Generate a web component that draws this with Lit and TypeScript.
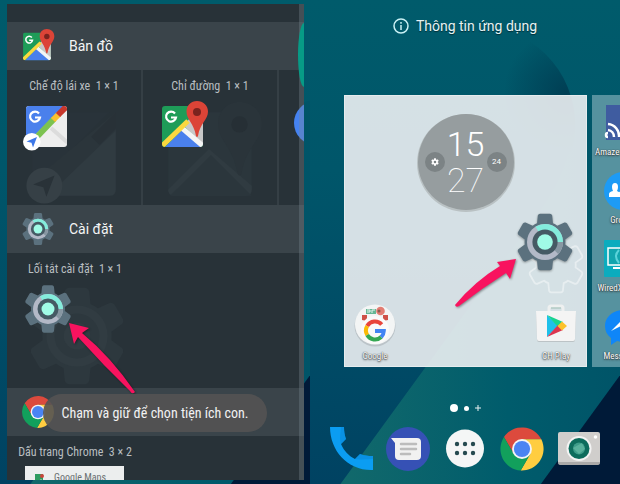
import { LitElement, html, svg, css } from "lit";
import { customElement } from "lit/decorators.js";

const polar = (r: number, deg: number) => {
  const a = (deg * Math.PI) / 180;
  return `${(25 + r * Math.sin(a)).toFixed(2)} ${(25 - r * Math.cos(a)).toFixed(2)}`;
};

// Six-toothed cog outline in a 50 x 50 box
const gearPath =
  [0, 60, 120, 180, 240, 300]
    .map(
      (a, i) =>
        `${i ? "A17 17 0 0 1" : "M"} ${polar(17, a - 23)} L${polar(23, a - 15)} Q${polar(24, a - 13)} ${polar(24, a - 10)} L${polar(24, a + 10)} Q${polar(24, a + 13)} ${polar(23, a + 15)} L${polar(17, a + 23)}`
    )
    .join(" ") + ` A17 17 0 0 1 ${polar(17, -23)}Z`;

const gear = (cls: string) => html`<svg class=${cls} viewBox="0 0 50 50" aria-hidden="true">
  <path d=${gearPath} fill="#5b717e" />
  <circle cx="25" cy="25" r="15" fill="#b3b9c7" />
  <path d="M25 10a15 15 0 0 1 15 15h-8a7 7 0 0 0-7-7z" fill="#84ecdc" />
  <path d="M25 10a15 15 0 0 0-8 2.300l4 6.500 4-1z" fill="#84ecdc" />
  <path d="M40 25a15 15 0 0 1-4 10l-5-5 1-5z" fill="#8797a2" />
  <circle cx="25" cy="25" r="10.500" fill="#455a64" />
  <circle cx="25" cy="25" r="6.500" fill="#a0fbe6" />
</svg>`;

const gearGhost = html`<svg class="ghost" viewBox="0 0 50 50" aria-hidden="true">
  <path d=${gearPath} fill="#2d383e" />
  <circle cx="25" cy="25" r="13" fill="none" stroke="#313c42" stroke-width="4" />
  <circle cx="25" cy="25" r="6.500" fill="#313c42" />
</svg>`;

const whiteG = svg`<path d="M16 12.500A5 5 0 1 0 17 16.500H12" fill="none" stroke="#fff" stroke-width="2.200" />`;

const pin = "M38 0c-6 0-10.500 4.600-10.500 10.500C27.500 19 35 22 37 35q1 2 2 0c2-13 10-16 10-24.500C49 4.600 44 0 38 0z";

const mapIcon = (cls: string) => html`<svg class=${cls} viewBox="0 0 50 50" aria-hidden="true">
  <defs><clipPath id="map-sq"><rect x="3" y="5" width="41" height="41" rx="3" /></clipPath></defs>
  <g clip-path="url(#map-sq)">
    <path d="M3 5h41v41H3z" fill="#1e9c58" />
    <path d="M24 24L44 5v38z" fill="#c8c8c8" />
    <path d="M5 47l19-19 20 20z" fill="#4a80ec" />
    <path d="M23 27l22 19" stroke="#f5f5f5" stroke-width="5" />
    <path d="M1 47L29 20" stroke="#fbd83f" stroke-width="5" />
  </g>
  ${whiteG}
  <path d=${pin} fill="#dc4437" />
  <circle cx="38" cy="11" r="4" fill="#7b231e" />
</svg>`;

const mapGhost = html`<svg class="ghost" viewBox="0 0 50 50" aria-hidden="true">
  <rect x="3" y="5" width="41" height="41" rx="3" fill="#2b363c" />
  <path d="M3 43L23 23l21 18v2q0 3-3 3H6q-3 0-3-3z" fill="#303b41" />
  <path d="M4 46L24 26l20 20z" fill="#2b363c" />
  <path d=${pin} fill="#2a343a" />
  <circle cx="38" cy="11" r="4" fill="#262f35" />
</svg>`;

const driveIcon = html`<svg class="ic50" viewBox="0 0 50 50" aria-hidden="true">
  <defs><clipPath id="drive-sq"><rect x="3" y="5" width="41" height="41" rx="3" /></clipPath></defs>
  <g clip-path="url(#drive-sq)">
    <path d="M3 5h41v41H3z" fill="#eee" />
    <path d="M3 5h38L3 43z" fill="#4a80ec" />
    <path d="M28 27l17 15" stroke="#dcdcdc" stroke-width="4" />
    <path d="M8 42L31 18" stroke="#7cc250" stroke-width="6" />
    <path d="M30 19l6-6" stroke="#fbc02d" stroke-width="6" />
    <path d="M35 14L46 3" stroke="#c8372c" stroke-width="6" />
  </g>
  ${whiteG}
  <circle cx="8.800" cy="40.800" r="8.800" fill="#fff" />
  <path d="M14 36L3.500 40.500l5 1.300 1.500 4.700z" fill="#3d78e8" />
</svg>`;

const driveGhost = html`<svg class="ghost" viewBox="0 0 50 50" aria-hidden="true">
  <path d="M44 6v37q0 3-3 3H14L9 34z" fill="#303b41" />
  <path d="M3 5h38L3 43z" fill="#29333a" />
  <path d="M9 34L44 5v9L17 40z" fill="#2b353b" />
  <path d="M32 17l4 4 8-8V5z" fill="#283137" />
  <circle cx="9" cy="41" r="8.800" fill="#364046" />
  <path d="M14 36L3.500 40.500l5 1.300 1.500 4.700z" fill="#293238" />
</svg>`;

const chromeIcon = (cls: string) => html`<svg class=${cls} viewBox="0 0 50 50" aria-hidden="true">
  <path d="M5.400 12.050A23.500 23.500 0 0 1 46 14.500H25L15.900 30.250z" fill="#dc4a3d" />
  <path d="M46 14.500A23.500 23.500 0 0 1 23.600 48.400L34.100 30.250 25 14.500z" fill="#ffcd40" />
  <path d="M23.600 48.400A23.500 23.500 0 0 1 5.400 12.050L15.900 30.250H34.100z" fill="#12a05c" />
  <circle cx="25" cy="25" r="10.800" fill="#f4f4f4" />
  <circle cx="25" cy="25" r="8.800" fill="#4a84f3" />
</svg>`;

const wallpaper = (id: string) => html`<svg class="wall" viewBox="0 0 310 484" preserveAspectRatio="xMidYMid slice" aria-hidden="true">
  <defs>
    <linearGradient id="${id}b" x1="0" y1="0" x2="0" y2="1">
      <stop offset="0" stop-color="#005b6b" /><stop offset=".35" stop-color="#00566a" /><stop offset="1" stop-color="#004262" />
    </linearGradient>
    <linearGradient id="${id}t" x1="0" y1="0" x2="1" y2="0">
      <stop offset="0" stop-color="#12696b" /><stop offset=".6" stop-color="#005c6c" /><stop offset="1" stop-color="#005468" />
    </linearGradient>
    <radialGradient id="${id}s" gradientUnits="userSpaceOnUse" cx="256" cy="92" r="62">
      <stop offset="0" stop-color="#003a50" stop-opacity=".85" /><stop offset="1" stop-color="#003a50" stop-opacity="0" />
    </radialGradient>
  </defs>
  <path d="M0 0h310v484H0z" fill="url(#${id}b)" />
  <path d="M30 484L113 370 230 210Q262 165 265 115L310 100V484z" fill="url(#${id}t)" />
  <circle cx="165" cy="125" r="100" fill="url(#${id}s)" />
  <path d="M310 374v110h-80z" fill="#001a38" />
</svg>`;

const phoneIcon = html`<svg class="dock-ic" viewBox="0 0 46 46" aria-hidden="true">
  <path d="M2 1h14c0 4 .6 8 2 12l-5 5c3 7 8 12 14 15l5-5c4 1.500 8 2 13 2v14C20 45 2 25 2 1z" fill="#0b9df2" />
  <path d="M13 18l5-5c-1.400-4-2-8-2-12h-3c0 5-2 11 0 17zM27 33l5-5c4 1.500 8 2 13 2v3c-6 0-12 1-18 0z" fill="#0785d6" opacity=".5" />
</svg>`;

const messagesIcon = html`<svg class="dock-ic" viewBox="0 0 46 46" aria-hidden="true">
  <circle cx="23" cy="23" r="22" fill="#3651b5" />
  <path d="M6 12h26q4 0 4 4v14q0 4-4 4H14q-4 0-4-4V17z" fill="#f1f1f1" />
  <path d="M16 18h15M16 23h15M16 28h9" stroke="#bcbcbc" stroke-width="2.500" stroke-linecap="round" />
</svg>`;

const appsIcon = html`<svg class="dock-ic" viewBox="0 0 46 46" aria-hidden="true">
  <circle cx="23" cy="22.500" r="19" fill="#f4f6f6" />
  ${[15, 23, 31].map((x) => [18, 27].map((y) => svg`<circle cx=${x} cy=${y} r="2.200" fill="#254a50" />`))}
</svg>`;

const cameraIcon = html`<svg class="dock-ic" viewBox="0 0 46 46" aria-hidden="true">
  <rect x="2" y="6" width="42" height="32" rx="2" fill="#d0cecc" />
  <path d="M2 36h42q0 3-2 3H4q-2 0-2-3z" fill="#aaa9a8" />
  <circle cx="23" cy="22.500" r="12.500" fill="#f3f3f3" />
  <circle cx="23" cy="22.500" r="10.500" fill="#0d6c5c" />
  <circle cx="23" cy="22.500" r="6" fill="#3d9c89" />
  <path d="M17 22l9-5 3 6-6 5z" fill="#6dbfa9" opacity=".6" />
  <circle cx="39.500" cy="11" r="1.800" fill="#fff" />
</svg>`;

const googleFolder = html`<svg class="app-ic" viewBox="0 0 42 44" aria-hidden="true">
  <circle cx="21" cy="23" r="20.500" fill="#000" opacity=".12" />
  <circle cx="21" cy="21.500" r="20" fill="#f3f5f5" />
  <path d="M8 12h5v6l-5-1zM29 12h5v5l-5 1z" fill="#cf5148" />
  <path d="M12 6h10v5H12z" fill="#65b795" />
  <path d="M13 7h3v2h-3M18 10V7h3" stroke="#e8f4ef" stroke-width="1" fill="none" />
  <circle cx="26.500" cy="8" r="4.300" fill="#e27c72" />
  <circle cx="25" cy="8" r="1.500" fill="#8a5b50" />
  <circle cx="21" cy="27" r="14" fill="#fafafa" />
  <g fill="none" stroke-width="4">
    <path d="M27.700 21.500A9 9 0 0 0 13.200 23" stroke="#e8453c" />
    <path d="M13.200 23a9 9 0 0 0 0 9" stroke="#fbbb05" />
    <path d="M13.200 32a9 9 0 0 0 14 2" stroke="#35a853" />
    <path d="M27.200 34a9 9 0 0 0 2.600-6H21" stroke="#4285f4" />
  </g>
</svg>`;

const playIcon = html`<svg class="app-ic" viewBox="0 0 42 44" aria-hidden="true">
  <path d="M14 9V5q0-2 2-2h10q2 0 2 2v4" fill="none" stroke="#eef0f0" stroke-width="3" />
  <path d="M16 5h10" stroke="#9fc0b4" stroke-width="1" />
  <path d="M1 9h40l-1 28q0 2-2 2H4q-2 0-2-2z" fill="#bcc3c6" />
  <path d="M1 8h40l-1 28q0 2-2 2H4q-2 0-2-2z" fill="#f4f4f4" />
  <path d="M12 12v22l11-11z" fill="#1fc0ea" />
  <path d="M12 12l16 7-5 5z" fill="#18d38f" />
  <path d="M12 34l16-7-5-5z" fill="#dc3550" />
  <path d="M27 18.500L32 23l-5 4.500L22.500 23z" fill="#fcc22b" />
</svg>`;

const feedIcon = html`<svg class="side-ic" viewBox="0 0 38 38" aria-hidden="true">
  <path d="M2 1h36v35H2z" fill="#3f5ca0" />
  <path d="M3 34a1 1 0 0 1 0-4M3 27a7 7 0 0 1 6 7M3 21a12 12 0 0 1 11 13" transform="translate(1 -1)" fill="none" stroke="#fff" stroke-width="2.500" />
</svg>`;
const groupsIcon = html`<svg class="side-ic" viewBox="0 0 38 38" aria-hidden="true">
  <circle cx="19" cy="19" r="19" fill="#1d9bf5" />
  <path d="M5 25v-3q0-2 4-3-1-2-1-4 0-4 3-4t3 4q0 2-1 4 3 1 3 3v3zM14 25v-3q0-2 3-3-1-2-1-5t4-4 4 4-1 5q4 1 4 4v2z" fill="#fff" />
</svg>`;
const displayIcon = html`<svg class="side-ic" viewBox="0 0 38 38" aria-hidden="true">
  <rect width="38" height="37" rx="1" fill="#0bacbe" />
  <path d="M4 8h32v17H4z" fill="#13a5ae" stroke="#fff" stroke-width="1.500" />
  <path d="M15 10q-6 6 0 13M19 11q-4 5 0 11" fill="none" stroke="#5bd3da" stroke-width="2" />
  <path d="M9 28h20" stroke="#fff" stroke-width="2" />
</svg>`;
const messengerIcon = html`<svg class="side-ic" viewBox="0 0 38 38" aria-hidden="true">
  <path d="M20 2C9 2 1 9 1 18c0 5 2 9 6 12v7l6-4c2 .6 5 1 7 1 11 0 19-7 19-16S31 2 20 2z" fill="#0f86f8" />
  <path d="M7 23l11-11 5 5 9-5-10 11-5-5z" fill="#fff" />
</svg>`;

const base = css`
  :host { display: block; font-family: "Roboto Condensed", Roboto, "Noto Sans", sans-serif; }
  * { box-sizing: border-box; }
  .screen { position: relative; overflow: hidden; height: 100%; isolation: isolate; }
  .wall { position: absolute; inset: 0; width: 100%; height: 100%; z-index: -1; }
  .arrow { position: absolute; overflow: visible; filter: drop-shadow(1px 1px 1px rgba(0, 0, 0, 0.4)); pointer-events: none; }
`;

@customElement("widget-picker")
export class WidgetPicker extends LitElement {
  static styles = [
    base,
    css`
      .screen { padding: 4px 6px 5px 7px; display: flex; }
      .panel { position: relative; flex: 1; min-width: 0; display: flex; flex-direction: column; background: #283238; padding-top: 18px; overflow: hidden; }
      .panel::after { content: ""; position: absolute; inset: 0 0 0 auto; width: 5px; background: rgba(120, 135, 142, 0.35); }
      .edge { position: absolute; right: 0; top: 19px; width: 6px; height: 64px; background: #079b86; border-radius: 6px 0 0 6px / 32px 0 0 32px; z-index: 1; }
      header { display: flex; align-items: center; gap: 12px; height: 48px; flex: none; padding-left: 12px; background: #3a444a; }
      h2 { margin: 0; font: 400 14px/20px Roboto, "Noto Sans", sans-serif; color: #f4f5f5; }
      .hic { width: 34px; height: 34px; margin: 0 2px; }
      .row { display: flex; height: 135px; flex: none; }
      .last { flex: 1 0 44px; height: 0; overflow: hidden; }
      .cell { width: 136px; flex: none; padding-top: 8px; }
      .row.divided .cell { border-right: 2px solid #353f45; }
      .name { margin: 0; font-size: 12px; line-height: 16px; text-align: center; color: #b9bec0; white-space: nowrap; }
      .art { position: relative; margin: 7px 0 0 16px; }
      .ic50 { position: relative; display: block; width: 50px; height: 50px; }
      .ghost { position: absolute; left: 3px; top: 1px; width: 102px; height: 102px; }
      .disc { width: 44px; height: 44px; margin: 4px 0 0 -1px; border-radius: 50%; background: #4582f0; }
      .preview { display: flex; gap: 10px; align-items: center; width: 99px; height: 24px; margin: 6px 0 0 18px; padding: 0 10px; background: #eceeee; color: #6b7072; font-size: 10px; line-height: 24px; white-space: nowrap; }
      .mini { width: 9px; height: 9px; flex: none; }
      .toast { position: absolute; left: 50%; bottom: 53px; transform: translateX(-50%); width: 224px; height: 38px; border-radius: 19px; background: rgba(84, 83, 83, 0.9); color: #f2f2f2; font-size: 14px; line-height: 38px; text-align: center; white-space: nowrap; }
      .arrow { left: 69px; top: 323px; width: 66px; height: 70px; }
    `,
  ];
  render() {
    return html`<section class="screen">
      ${wallpaper("l")}
      <div class="panel">
        <header>${mapIcon("hic")}<h2>Bản đồ</h2></header>
        <div class="row divided">
          <div class="cell"><p class="name">Chế độ lái xe&nbsp; 1 × 1</p><div class="art">${driveGhost}${driveIcon}</div></div>
          <div class="cell"><p class="name">Chỉ đường&nbsp; 1 × 1</p><div class="art">${mapGhost}${mapIcon("ic50")}</div></div>
          <div class="cell"><p class="name">&nbsp;</p><div class="art"><div class="disc"></div></div></div>
        </div>
        <header>${gear("hic")}<h2>Cài đặt</h2></header>
        <div class="row">
          <div class="cell"><p class="name">Lối tắt cài đặt&nbsp; 1 × 1</p><div class="art">${gearGhost}${gear("ic50")}</div></div>
        </div>
        <header>${chromeIcon("hic")}</header>
        <div class="row last">
          <div class="cell">
            <p class="name">Dấu trang Chrome&nbsp; 3 × 2</p>
            <div class="preview">
              <svg class="mini" viewBox="0 0 9 9" aria-hidden="true"><path d="M0 0h8v9H0z" fill="#2e9c60" /><path d="M3 9l3-4 3 4z" fill="#eee" /><circle cx="7" cy="2" r="2" fill="#c9453a" /></svg>
              <span>Google Maps</span>
            </div>
          </div>
        </div>
        <div class="edge"></div>
      </div>
      <svg class="arrow" viewBox="0 0 66 70" aria-hidden="true"><path d="M0 0L20 5l-7 5Q42 34 66 69q-3 3-5-1Q34 42 9 14L5 21z" fill="#f8135f" /></svg>
      <div class="toast" role="status">Chạm và giữ để chọn tiện ích con.</div>
    </section>`;
  }
}

@customElement("home-screen")
export class HomeScreen extends LitElement {
  static styles = [
    base,
    css`
      .screen { display: flex; flex-direction: column; }
      button { display: block; border: 0; padding: 0; margin: 0; background: none; font: inherit; color: inherit; }
      .info { display: flex; align-items: center; gap: 7px; align-self: center; margin-top: 16px; font: 400 14px/20px Roboto, "Noto Sans", sans-serif; color: #e6f2f3; text-shadow: 0 1px 1px rgba(0, 0, 0, 0.5); }
      .info svg { width: 16px; height: 16px; }
      .pages { display: flex; gap: 5px; margin: 59px 0 0 34px; height: 272px; }
      .page { flex: 1; min-width: 0; display: flex; flex-direction: column; justify-content: space-between; padding: 18px 6px 2px; background: rgba(243, 244, 246, 0.88); border: 1px solid #e6ecee; }
      .clock { align-self: center; display: grid; grid-template-columns: 20px 1fr 20px; align-items: center; width: 96px; height: 96px; padding: 0 7px; border-radius: 50%; background: #969d9f; box-shadow: 0 1px 0 1px #b9c1c3; color: #fff; }
      .time { text-align: center; font: 300 34px/36px Roboto, sans-serif; }
      .time span { display: block; }
      .thin { font-weight: 100; }
      .knob { display: grid; place-items: center; width: 20px; height: 20px; border-radius: 50%; background: #7c8385; font: 400 8px/20px Roboto, sans-serif; }
      .knob svg { width: 8px; height: 8px; }
      .apps { display: flex; justify-content: space-between; }
      .app { width: 48px; text-align: center; }
      .app-ic { display: block; width: 42px; height: 44px; margin: 0 auto 1px; }
      .label { display: block; font-size: 9px; line-height: 16px; white-space: nowrap; color: #fff; text-shadow: 0 0 1px #222, 0 1px 2px #333; }
      .side { width: 28px; flex: none; overflow: hidden; background: #56929f; padding: 3px 0 0 3px; }
      .side .app { width: 56px; height: 68px; }
      .side-ic { display: block; width: 38px; height: 38px; margin: 0 auto 2px; }
      .cut { text-align: left; }
      .dots { display: flex; align-items: center; justify-content: center; gap: 6px; height: 10px; margin-top: 36px; color: #e8f0f1; }
      .dot { width: 5px; height: 5px; border-radius: 50%; background: #fff; }
      .big { width: 8px; height: 8px; }
      .plus { width: 6px; height: 6px; }
      .dock { display: flex; justify-content: space-between; margin: 13px 18px 0; }
      .dock-ic { display: block; width: 46px; height: 46px; }
      .arrow { left: 145px; top: 259px; width: 62px; height: 48px; }
      .drag, .outline { position: absolute; left: 205px; top: 212px; width: 60px; height: 60px; }
      .drag { filter: drop-shadow(0 1px 1px rgba(0, 0, 0, 0.35)); }
      .outline { left: 217px; top: 236px; width: 58px; height: 58px; opacity: 0.6; }
    `,
  ];
  render() {
    const side = [
      { icon: feedIcon, name: "Amaze", cut: true },
      { icon: groupsIcon, name: "Groups", cut: false },
      { icon: displayIcon, name: "WiredXDisplay", cut: false },
      { icon: messengerIcon, name: "Messenger", cut: false },
    ];
    return html`<section class="screen">
      ${wallpaper("r")}
      <button class="info">
        <svg viewBox="0 0 16 16" aria-hidden="true"><circle cx="8" cy="8" r="7" fill="none" stroke="#c9f1f5" stroke-width="1.500" /><path d="M8 7v5M8 4v1.700" stroke="#c9f1f5" stroke-width="1.500" /></svg>
        <span>Thông tin ứng dụng</span>
      </button>
      <div class="pages">
        <div class="page">
          <div class="clock">
            <span class="knob"><svg viewBox="0 0 50 50" aria-hidden="true"><path d=${gearPath} fill="#fff" /><circle cx="25" cy="25" r="8" fill="#7c8385" /></svg></span>
            <div class="time"><span>15</span><span class="thin">27</span></div>
            <span class="knob">24</span>
          </div>
          <div class="apps">
            <button class="app">${googleFolder}<span class="label">Google</span></button>
            <button class="app">${playIcon}<span class="label">CH Play</span></button>
          </div>
        </div>
        <div class="side">
          ${side.map((a) => html`<button class="app">${a.icon}<span class="label ${a.cut ? "cut" : ""}">${a.name}</span></button>`)}
        </div>
      </div>
      <div class="dots">
        <span class="dot big"></span><span class="dot"></span>
        <svg class="plus" viewBox="0 0 6 6" aria-hidden="true"><path d="M3 0v6M0 3h6" stroke="#e8f0f1" /></svg>
      </div>
      <nav class="dock">
        <button aria-label="Phone">${phoneIcon}</button>
        <button aria-label="Messages">${messagesIcon}</button>
        <button aria-label="Apps">${appsIcon}</button>
        <button aria-label="Chrome">${chromeIcon("dock-ic")}</button>
        <button aria-label="Camera">${cameraIcon}</button>
      </nav>
      <svg class="outline" viewBox="0 0 50 50" aria-hidden="true"><path d=${gearPath} fill="none" stroke="#f4f7f8" stroke-width="1.500" /></svg>
      ${gear("drag")}
      <svg class="arrow" viewBox="0 0 62 48" aria-hidden="true"><path d="M61 0L42 3l3 4Q20 22 0 46q1 3 4 1Q26 30 51 14l4 6z" fill="#f8135f" /></svg>
    </section>`;
  }
}

@customElement("app-root")
export class AppRoot extends LitElement {
  static styles = css`
    :host { display: grid; grid-template-columns: minmax(0, 1fr) minmax(0, 1fr); min-height: 100vh; overflow: hidden; }
  `;
  render() {
    return html`<widget-picker></widget-picker><home-screen></home-screen>`;
  }
}
